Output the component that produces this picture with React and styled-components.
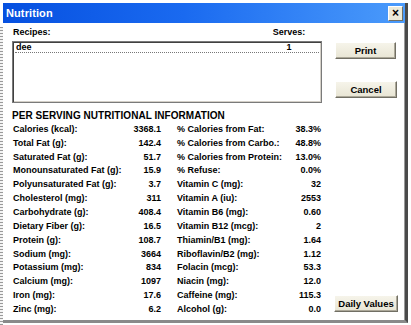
import React from "react";
import styled, { createGlobalStyle } from "styled-components";

const GlobalStyle = createGlobalStyle`
  body {
    margin: 0;
    background: #fff;
    font-family: "Liberation Sans", Arial, sans-serif;
  }
`;

const Page = styled.div`
  display: flex;
  padding-top: 3px;
  width: 411px;
  height: 322px;
  overflow: hidden;
`;

const Strip = styled.div`
  width: 3px;
  margin-top: 24px;
  background: repeating-linear-gradient(to bottom, #9a9a9a 0 1px, #f4f4f4 1px 3px);
`;

const Dialog = styled.div`
  width: 405px;
  height: 320px;
  box-sizing: border-box;
  display: flex;
  flex-direction: column;
  background: #fff;
  border-right: 3px solid #4a4a4a;
  border-bottom: 3px solid #8a8a8a;
  box-shadow: inset -1px 0 #9a9a9a;
  overflow: hidden;
`;

const TitleBar = styled.div`
  height: 20px;
  flex: none;
  display: flex;
  align-items: center;
  justify-content: space-between;
  padding: 0 2px 0 3px;
  background: linear-gradient(to right, #0650e0 0%, #1a6af0 45%, #4b9bfb 100%);
`;

const Title = styled.span`
  color: #fff;
  font-size: 11px;
  font-weight: bold;
  letter-spacing: 0.1px;
`;

const CloseButton = styled.div`
  width: 13px;
  height: 13px;
  display: flex;
  align-items: center;
  justify-content: center;
  background: #ece9d8;
  border: 1px solid;
  border-color: #fff #716f64 #716f64 #fff;
  font-size: 12px;
  font-weight: bold;
  line-height: 1;
  color: #000;
`;

const Body = styled.div`
  display: flex;
  flex-direction: column;
  padding: 3px 0 0 9px;
  font-size: 9px;
  font-weight: bold;
  color: #000;
`;

const TopRow = styled.div`
  display: flex;
`;

const RecipeColumn = styled.div`
  width: 310px;
`;

const ColumnLabels = styled.div`
  display: grid;
  grid-template-columns: 1fr 40px;
  line-height: 12px;
  padding: 0 13px 0 1px;
`;

const ListBox = styled.div`
  margin-top: 3px;
  height: 62px;
  box-sizing: border-box;
  border: 1px solid #7a7a7a;
  box-shadow: inset 1px 1px #404040, inset -1px -1px #d4d0c8;
  padding: 1px 2px;
`;

const ListRow = styled.div`
  display: grid;
  grid-template-columns: 1fr 40px;
  line-height: 9px;
  padding: 0 10px 0 1px;
  border-bottom: 1px dotted #777;
`;

const Centered = styled.span`
  text-align: center;
`;

const ButtonColumn = styled.div`
  display: flex;
  flex-direction: column;
  margin-left: 13px;
  padding-top: 16px;
  gap: 22px;
`;

const Button = styled.div`
  width: ${(p) => p.$w}px;
  height: 17px;
  box-sizing: border-box;
  display: flex;
  align-items: center;
  justify-content: center;
  background: linear-gradient(to bottom, #f6f4ea, #e8e5d4);
  border: 1px solid;
  border-color: #fff #716f64 #716f64 #fff;
  box-shadow: inset -1px -1px #aca899;
  font-size: 9.5px;
  font-weight: bold;
`;

const Heading = styled.div`
  margin-top: 7px;
  line-height: 12px;
  font-size: 10px;
  letter-spacing: 0.05px;
`;

const InfoRow = styled.div`
  display: flex;
`;

const Table = styled.div`
  width: 310px;
  display: grid;
  grid-template-columns: 113px 35px 16px 108px 36px;
  grid-auto-rows: 13.85px;
  align-items: center;
  padding-left: 1px;
`;

const Label = styled.span`
  white-space: nowrap;
`;

const Value = styled.span`
  text-align: right;
  white-space: nowrap;
`;

const Spacer = styled.span``;

const SideColumn = styled.div`
  display: flex;
  align-items: flex-end;
  margin-left: 11px;
  padding-bottom: 4px;
`;

const rows = [
  ["Calories (kcal):", "3368.1", "% Calories from Fat:", "38.3%"],
  ["Total Fat (g):", "142.4", "% Calories from Carbo.:", "48.8%"],
  ["Saturated Fat (g):", "51.7", "% Calories from Protein:", "13.0%"],
  ["Monounsaturated Fat (g):", "15.9", "% Refuse:", "0.0%"],
  ["Polyunsaturated Fat (g):", "3.7", "Vitamin C (mg):", "32"],
  ["Cholesterol (mg):", "311", "Vitamin A (iu):", "2553"],
  ["Carbohydrate (g):", "408.4", "Vitamin B6 (mg):", "0.60"],
  ["Dietary Fiber (g):", "16.5", "Vitamin B12 (mcg):", "2"],
  ["Protein (g):", "108.7", "Thiamin/B1 (mg):", "1.64"],
  ["Sodium (mg):", "3664", "Riboflavin/B2 (mg):", "1.12"],
  ["Potassium (mg):", "834", "Folacin (mcg):", "53.3"],
  ["Calcium (mg):", "1097", "Niacin (mg):", "12.0"],
  ["Iron (mg):", "17.6", "Caffeine (mg):", "115.3"],
  ["Zinc (mg):", "6.2", "Alcohol (g):", "0.0"],
];

export default function App() {
  return (
    <>
      <GlobalStyle />
      <Page>
        <Strip />
        <Dialog>
          <TitleBar>
            <Title>Nutrition</Title>
            <CloseButton>×</CloseButton>
          </TitleBar>
          <Body>
            <TopRow>
              <RecipeColumn>
                <ColumnLabels>
                  <span>Recipes:</span>
                  <Centered>Serves:</Centered>
                </ColumnLabels>
                <ListBox>
                  <ListRow>
                    <span>dee</span>
                    <Centered>1</Centered>
                  </ListRow>
                </ListBox>
              </RecipeColumn>
              <ButtonColumn>
                <Button $w={61}>Print</Button>
                <Button $w={62}>Cancel</Button>
              </ButtonColumn>
            </TopRow>
            <Heading>PER SERVING NUTRITIONAL INFORMATION</Heading>
            <InfoRow>
              <Table>
                {rows.map(([l1, v1, l2, v2]) => (
                  <React.Fragment key={l1}>
                    <Label>{l1}</Label>
                    <Value>{v1}</Value>
                    <Spacer />
                    <Label>{l2}</Label>
                    <Value>{v2}</Value>
                  </React.Fragment>
                ))}
              </Table>
              <SideColumn>
                <Button $w={64}>Daily Values</Button>
              </SideColumn>
            </InfoRow>
          </Body>
        </Dialog>
      </Page>
    </>
  );
}
